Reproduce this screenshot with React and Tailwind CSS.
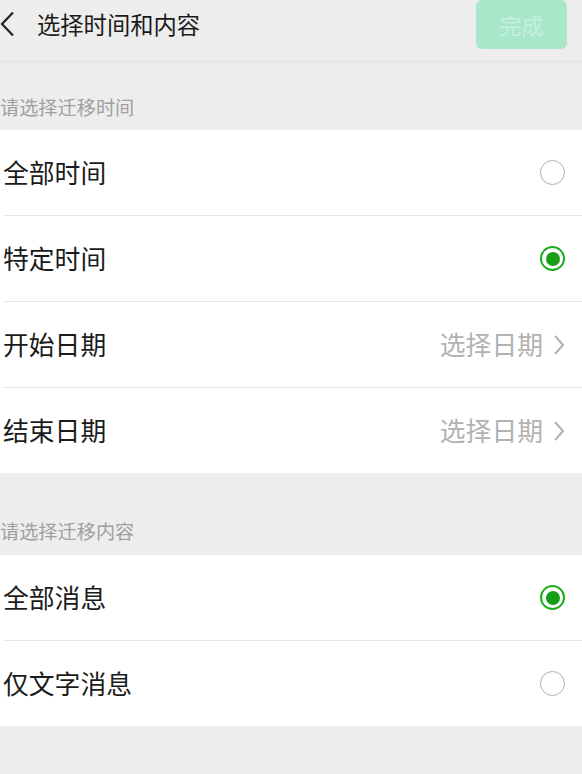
const font = { fontFamily: '"Noto Sans CJK SC", "Noto Sans", sans-serif' };

function Radio({ checked }) {
    if (checked) {
        return (
            <div className="w-[25px] h-[25px] rounded-full border-[2.5px] border-[#1aad19] flex items-center justify-center">
                <div className="w-[14px] h-[14px] rounded-full bg-[#169e17]" />
            </div>
        );
    }
    return <div className="w-[25px] h-[25px] rounded-full border-[1.5px] border-[#b0b0b0]" />;
}

function Chevron() {
    return (
        <svg width="12" height="22" viewBox="0 0 12 22" className="ml-[10px]">
            <path d="M2 2 L10 11 L2 20" fill="none" stroke="#b2b2b2" strokeWidth="2" />
        </svg>
    );
}

function Row({ label, right }) {
    return (
        <div className="h-[85px] flex items-center justify-between pl-[3px] pr-[17px]">
            <span className="text-[25.8px] text-[#1b1b1b]">{label}</span>
            {right}
        </div>
    );
}

function Divider() {
    return <div className="h-px bg-[#e8e8e8] ml-[3px]" />;
}

function DatePick() {
    return (
        <div className="flex items-center">
            <span className="text-[25.8px] text-[#b2b2b2]">选择日期</span>
            <Chevron />
        </div>
    );
}

export default function App() {
    return (
        <div className="min-h-screen bg-[#ededed] w-[582px] h-[774px] overflow-hidden" style={font}>
            {/* header */}
            <div className="h-[62px] flex items-start border-b border-[#e3e3e3]">
                <div className="flex items-center h-[48px]">
                    <svg width="16" height="26" viewBox="0 0 16 26">
                        <path d="M13 1.5 L2 13 L13 24.5" fill="none" stroke="#222" strokeWidth="2.2" />
                    </svg>
                    <span className="ml-[21px] text-[23.3px] text-[#1b1b1b]">选择时间和内容</span>
                </div>
                <div className="ml-auto mr-[15px] w-[91px] h-[49px] rounded-[6px] bg-[#a9e7ca] flex items-center justify-center">
                    <span className="text-[22px] text-[#c6f0dc]">完成</span>
                </div>
            </div>

            <div className="h-[68px] flex items-end pb-[8px]">
                <span className="text-[19.2px] text-[#a0a0a0]">请选择迁移时间</span>
            </div>
            <div className="bg-white">
                <Row label="全部时间" right={<Radio />} />
                <Divider />
                <Row label="特定时间" right={<Radio checked />} />
                <Divider />
                <Row label="开始日期" right={<DatePick />} />
                <Divider />
                <Row label="结束日期" right={<DatePick />} />
            </div>

            <div className="h-[82px] flex items-end pb-[9px]">
                <span className="text-[19.2px] text-[#a0a0a0]">请选择迁移内容</span>
            </div>
            <div className="bg-white">
                <Row label="全部消息" right={<Radio checked />} />
                <Divider />
                <Row label="仅文字消息" right={<Radio />} />
            </div>
        </div>
    );
}
